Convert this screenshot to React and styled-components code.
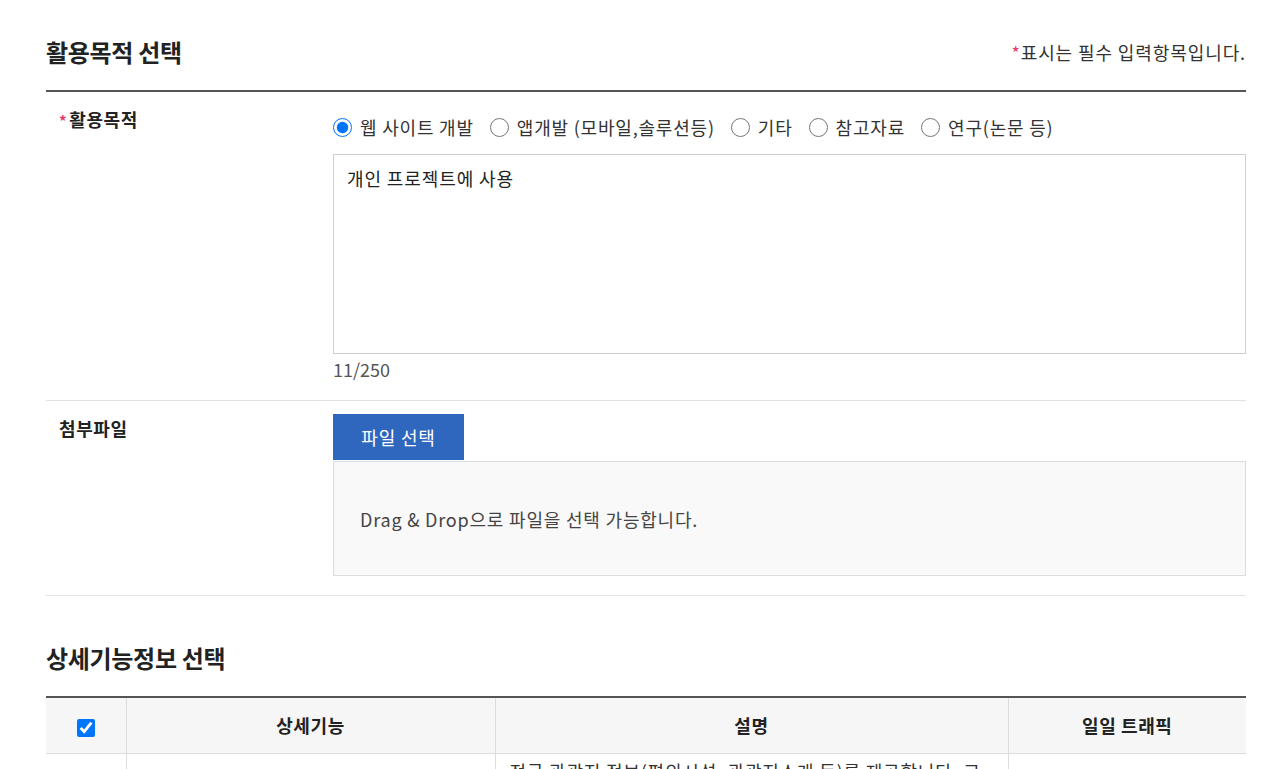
import React, { useState } from "react";
import styled, { createGlobalStyle } from "styled-components";

const Global = createGlobalStyle`
  html, body { margin: 0; padding: 0; background: #fff; }
  body {
    font-family: "Noto Sans CJK KR", "Noto Sans", sans-serif;
    color: #333;
    font-size: 18px;
    letter-spacing: 0.8px;
    overflow: hidden;
  }
  * { box-sizing: border-box; }
`;

const Page = styled.div`
  width: 1200px;
  margin-left: 46px;
  padding-top: 34px;
`;

const SectionHead = styled.div`
  display: flex;
  align-items: center;
  justify-content: space-between;
  height: 36px;
  margin: ${(p) => (p.$second ? "44px 0 20px" : "0 0 20px")};
`;

const Title = styled.h2`
  margin: 0;
  font-size: 24px;
  line-height: 36px;
  font-weight: 700;
  color: #222;
  letter-spacing: -0.3px;
`;

const Note = styled.p`
  margin: 0;
  font-size: 18px;
  color: #333;
  letter-spacing: 0.9px;
`;

const Star = styled.span`
  color: #e8386d;
  font-size: ${(p) => (p.$small ? "15px" : "18px")};
  margin-right: ${(p) => (p.$small ? "2px" : "0")};
`;

const Form = styled.div`
  border-top: 2px solid #555;
`;

const Row = styled.div`
  display: grid;
  grid-template-columns: 287px 1fr;
  padding: 13px 0 19px;
  border-bottom: 1px solid #e2e2e2;
`;

const Label = styled.div`
  padding: 2px 0 0 13px;
  line-height: 24px;
  font-weight: 700;
  color: #222;
  font-size: 18px;
  letter-spacing: 0.6px;
`;

const RadioGroup = styled.div`
  display: flex;
  align-items: center;
  gap: 16px;
  padding: 10px 0;
  line-height: 24px;
`;

const RadioItem = styled.label`
  display: flex;
  align-items: center;
  gap: 8px;
  cursor: pointer;
  color: #333;
`;

const Radio = styled.input.attrs({ type: "radio" })`
  width: 19px;
  height: 19px;
  margin: 0;
  accent-color: #0075ff;
`;

const TextArea = styled.textarea`
  display: block;
  width: 100%;
  height: 200px;
  margin-top: 5px;
  padding: 10px 13px;
  border: 1px solid #cfcfcf;
  resize: none;
  font-family: inherit;
  font-size: 18px;
  letter-spacing: 0.9px;
  line-height: 26px;
  color: #222;
  outline: none;
`;

const Counter = styled.div`
  margin-top: 3px;
  line-height: 24px;
  color: #555;
  letter-spacing: 0;
`;

const FileButton = styled.button`
  display: block;
  width: 131px;
  height: 46px;
  border: 0;
  background: #3067be;
  color: #fff;
  font-family: inherit;
  font-size: 18px;
  letter-spacing: 0.8px;
  cursor: pointer;
`;

const DropZone = styled.div`
  height: 115px;
  margin-top: 1px;
  background: #f9f9f9;
  border: 1px solid #ddd;
  display: flex;
  align-items: center;
  padding-left: 26px;
  color: #444;
`;

const Table = styled.table`
  width: 100%;
  border-collapse: collapse;
  table-layout: fixed;
  border-top: 2px solid #555;
`;

const Th = styled.th`
  height: 56px;
  background: #f6f6f6;
  border-bottom: 1px solid #ddd;
  border-left: ${(p) => (p.$first ? "0" : "1px solid #ddd")};
  font-weight: 700;
  font-size: 18px;
  letter-spacing: 0.6px;
  color: #222;
  text-align: center;
  vertical-align: middle;
`;

const Td = styled.td`
  border-bottom: 1px solid #ddd;
  border-left: ${(p) => (p.$first ? "0" : "1px solid #ddd")};
  padding: 4px 14px;
  line-height: 26px;
  vertical-align: top;
  color: #333;
`;

const Check = styled.input.attrs({ type: "checkbox" })`
  width: 18px;
  height: 18px;
  margin: 0;
  vertical-align: middle;
  accent-color: #0075ff;
`;

const purposes = ["웹 사이트 개발", "앱개발 (모바일,솔루션등)", "기타", "참고자료", "연구(논문 등)"];

export default function App() {
  const [purpose, setPurpose] = useState(0);
  const [text, setText] = useState("개인 프로젝트에 사용");

  return (
    <>
      <Global />
      <Page>
        <SectionHead>
          <Title>활용목적 선택</Title>
          <Note>
            <Star>*</Star>표시는 필수 입력항목입니다.
          </Note>
        </SectionHead>

        <Form>
          <Row>
            <Label>
              <Star $small>*</Star>활용목적
            </Label>
            <div>
              <RadioGroup>
                {purposes.map((p, i) => (
                  <RadioItem key={p}>
                    <Radio name="purpose" checked={purpose === i} onChange={() => setPurpose(i)} />
                    {p}
                  </RadioItem>
                ))}
              </RadioGroup>
              <TextArea value={text} onChange={(e) => setText(e.target.value)} maxLength={250} />
              <Counter>{text.length}/250</Counter>
            </div>
          </Row>
          <Row>
            <Label>첨부파일</Label>
            <div>
              <FileButton>파일 선택</FileButton>
              <DropZone>Drag &amp; Drop으로 파일을 선택 가능합니다.</DropZone>
            </div>
          </Row>
        </Form>

        <SectionHead $second>
          <Title>상세기능정보 선택</Title>
        </SectionHead>

        <Table>
          <colgroup>
            <col style={{ width: 80 }} />
            <col style={{ width: 369 }} />
            <col style={{ width: 513 }} />
            <col style={{ width: 238 }} />
          </colgroup>
          <thead>
            <tr>
              <Th $first>
                <Check defaultChecked />
              </Th>
              <Th>상세기능</Th>
              <Th>설명</Th>
              <Th>일일 트래픽</Th>
            </tr>
          </thead>
          <tbody>
            <tr>
              <Td $first></Td>
              <Td></Td>
              <Td>전국 관광지 정보(편의시설, 관광지소개 등)를 제공합니다. 고객이 원하는 관광지 정보를 조회할 수 있습니다.</Td>
              <Td></Td>
            </tr>
          </tbody>
        </Table>
      </Page>
    </>
  );
}
